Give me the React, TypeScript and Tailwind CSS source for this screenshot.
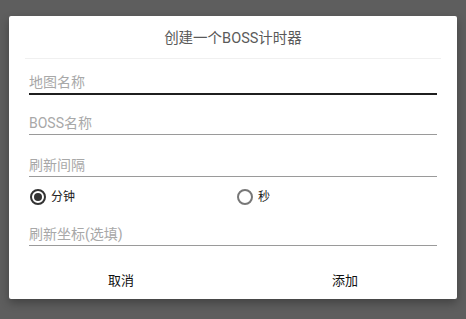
export default function App() {
  const font = { fontFamily: 'Roboto, "Noto Sans CJK SC", sans-serif' }
  return (
    <div
      className="h-[319px] w-[466px] bg-[#5e5e5e] pt-[16px] px-[9px]"
      style={font}
    >
      <div className="h-[283px] bg-white rounded-[2px] shadow-[0_4px_10px_rgba(0,0,0,0.3)] flex flex-col">
        {/* title */}
        <div className="h-[42px] flex items-center justify-center pt-[3px] text-[14.5px] text-[#5a5a5a]">
          创建一个BOSS计时器
        </div>
        <div className="mx-[16px] h-[1px] bg-[#f0f0f0]" />

        <div className="px-[20px] flex flex-col">
          <div className="h-[36px] flex items-end pb-[1px] border-b-2 border-[#1f1f1f] text-[14px] leading-[20px] text-[#a8a8a8]">
            地图名称
          </div>
          <div className="h-[40px] flex items-end pb-[1px] border-b border-[#9a9a9a] text-[14px] leading-[20px] text-[#a8a8a8]">
            BOSS名称
          </div>
          <div className="h-[42px] flex items-end pb-[1px] border-b border-[#9a9a9a] text-[14px] leading-[20px] text-[#a8a8a8]">
            刷新间隔
          </div>

          {/* unit radios */}
          <div className="h-[40px] flex items-center pl-[1px] text-[12px] text-[#222]">
            <label className="w-[207px] flex items-center gap-[5px]">
              <span className="w-[16px] h-[16px] rounded-full border-2 border-[#333] flex items-center justify-center">
                <span className="w-[8px] h-[8px] rounded-full bg-[#333]" />
              </span>
              分钟
            </label>
            <label className="flex items-center gap-[5px]">
              <span className="w-[16px] h-[16px] rounded-full border-2 border-[#777]" />
              秒
            </label>
          </div>

          <div className="h-[29px] flex items-end pb-[1px] border-b border-[#9a9a9a] text-[14px] leading-[20px] text-[#a8a8a8]">
            刷新坐标(选填)
          </div>
        </div>

        <div className="mt-[17px] h-[36px] flex text-[13px] text-[#111]">
          <button className="flex-1 flex items-center justify-center">取消</button>
          <button className="flex-1 flex items-center justify-center">添加</button>
        </div>
      </div>
    </div>
  )
}
